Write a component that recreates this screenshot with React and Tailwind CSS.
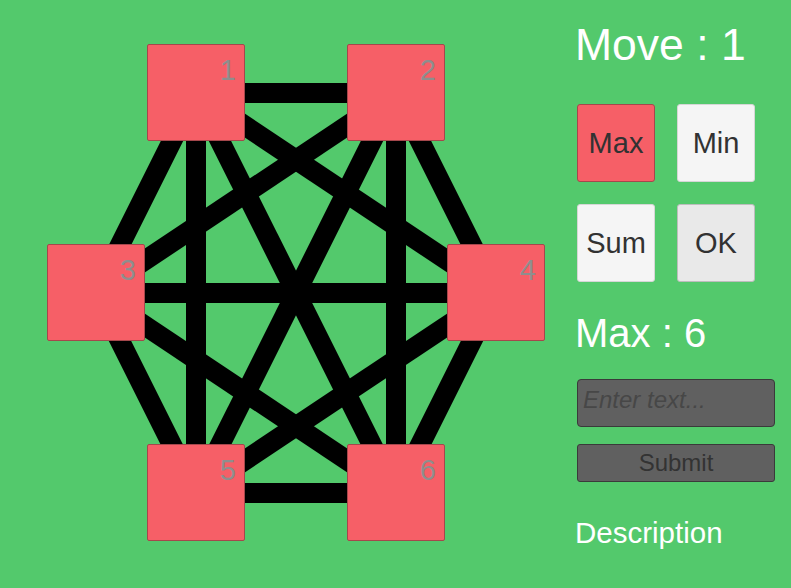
import React from 'react';

const nodes = [
  { id: 1, x: 147, y: 44 },
  { id: 2, x: 347, y: 44 },
  { id: 3, x: 47, y: 244 },
  { id: 4, x: 447, y: 244 },
  { id: 5, x: 147, y: 444 },
  { id: 6, x: 347, y: 444 },
];

const SIZE = 98;

// every node links to every other node
const edges = [];
for (let i = 0; i < nodes.length; i++) {
  for (let j = i + 1; j < nodes.length; j++) {
    edges.push([nodes[i], nodes[j]]);
  }
}

const center = (n) => ({ cx: n.x + SIZE / 2, cy: n.y + SIZE / 2 });

const Graph = () => (
  <div className="relative w-[560px] h-full shrink-0">
    <svg className="absolute inset-0" width="560" height="588">
      {edges.map(([a, b]) => {
        const p = center(a);
        const q = center(b);
        return (
          <line
            key={`${a.id}-${b.id}`}
            x1={p.cx}
            y1={p.cy}
            x2={q.cx}
            y2={q.cy}
            stroke="#000"
            strokeWidth="20"
          />
        );
      })}
    </svg>
    {nodes.map((n) => (
      <div
        key={n.id}
        className="absolute w-[98px] h-[97px] bg-[#f65f67] border border-[#a5474c] rounded-[2px]"
        style={{ left: n.x, top: n.y }}
      >
        <span className="absolute right-[8px] top-[11px] text-[29px] leading-[29px] text-[#8e8e8e]">
          {n.id}
        </span>
      </div>
    ))}
  </div>
);

const OpButton = ({ label, className }) => (
  <button
    type="button"
    className={`w-[78px] h-[78px] rounded-[3px] border text-[29px] leading-none text-[#323232] flex items-center justify-center ${className}`}
  >
    {label}
  </button>
);

const App = () => {
  return (
    <div
      className="w-[791px] h-[588px] bg-[#53c96c] flex overflow-hidden"
      style={{ fontFamily: '"Liberation Sans", Arial, sans-serif' }}
    >
      <Graph />

      {/* Side panel */}
      <div className="flex flex-col pl-[17px] pt-[23px]">
        <div className="-ml-[2px] text-[44.5px] leading-[44px] text-white whitespace-nowrap">Move : 1</div>

        <div className="grid grid-cols-[78px_78px] gap-x-[22px] gap-y-[22px] mt-[37px]">
          <OpButton label="Max" className="bg-[#f65f67] border-[#a5474c]" />
          <OpButton label="Min" className="bg-[#f5f5f5] border-[#d6d6d6]" />
          <OpButton label="Sum" className="bg-[#f5f5f5] border-[#d6d6d6]" />
          <OpButton label="OK" className="bg-[#e9e9e9] border-[#bdbdbd]" />
        </div>

        <div className="-ml-[2px] text-[40px] leading-[40px] text-white mt-[31px] whitespace-nowrap">Max : 6</div>

        <input
          type="text"
          placeholder="Enter text..."
          className="mt-[26px] w-[198px] h-[48px] bg-[#606060] border border-[#3a3a3a] rounded-[4px] px-[5px] pb-[6px] text-[24px] italic text-[#333] placeholder:text-[#474747] outline-none"
        />

        <button
          type="button"
          className="mt-[17px] w-[198px] h-[38px] bg-[#606060] border border-[#3a3a3a] rounded-[3px] text-[24px] leading-none text-[#333]"
        >
          Submit
        </button>

        <div className="-ml-[2px] text-[29.5px] leading-[29px] text-white mt-[36px] whitespace-nowrap">Description</div>
      </div>
    </div>
  );
};

export default App;
